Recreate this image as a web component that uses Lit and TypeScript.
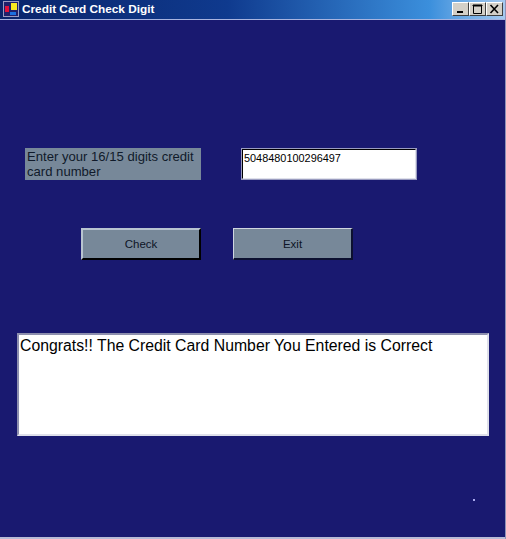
import { LitElement, html, css } from "lit";
import { customElement } from "lit/decorators.js";

@customElement("app-root")
export class AppRoot extends LitElement {
  static styles = css`
    :host { display: block; width: 506px; height: 539px; font-family: "Liberation Sans", Arial, sans-serif; overflow: hidden; }
    .window { position: relative; box-sizing: border-box; width: 506px; height: 539px; display: flex; flex-direction: column; background: #191970; border-right: 1px solid #8f92b8; }
    .titlebar { box-sizing: border-box; height: 20px; flex: none; display: flex; align-items: center; padding: 0 2px 1px 3px; gap: 3px;
      background: linear-gradient(90deg, #0a246a 0%, #0f3a8e 45%, #3b8fdc 85%, #a6caf0 100%); border-bottom: 1px solid #a8b4e0; }
    .app-icon { width: 16px; height: 16px; flex: none; display: block; }
    .title { color: #fff; font-weight: 700; font-size: 11.8px; flex: 1; white-space: nowrap; }
    .controls { display: flex; }
    .ctl { box-sizing: border-box; width: 17px; height: 14px; background: #d4d0c8; display: block;
      border: 1px solid; border-color: #fff #404040 #404040 #fff; }
    .ctl svg { display: block; width: 15px; height: 12px; }
    .form { flex: 1; display: flex; flex-direction: column; border-bottom: 2px solid #b9bbd6; }
    .row1 { display: flex; padding: 128px 0 0 25px; gap: 40px; }
    .label { box-sizing: border-box; width: 176px; height: 32px; background: #778899; color: #101a2a; font-size: 13.1px; line-height: 15px; padding: 1px 2px; }
    .input { box-sizing: border-box; width: 176px; height: 32px; background: #fff; color: #000; font-size: 10.9px; line-height: 14px; padding: 1px 1px;
      border: 2px solid; border-color: #000 #dfe0ea #dfe0ea #000; outline: 1px solid #9a9cc0; outline-offset: -1px; }
    .row2 { display: flex; padding: 48px 0 0 81px; gap: 32px; }
    .btn { box-sizing: border-box; width: 120px; height: 32px; background: #778899; color: #0d1526; font-size: 11.5px; display: flex; align-items: center; justify-content: center; font-family: "Liberation Sans", Arial, sans-serif; padding: 0; }
    .btn.check { border: 2px solid; border-color: #b8c4d0 #000 #000 #b8c4d0; }
    .btn.exit { border: 1px solid; border-color: #cfd6e0 #0c1030 #0c1030 #cfd6e0; border-bottom-width: 2px; border-right-width: 2px; }
    .result { box-sizing: border-box; margin: 73px 0 0 17px; width: 472px; height: 103px; background: #fff; color: #000; font-size: 15.8px; line-height: 19px; padding: 1px 1px;
      border: 2px solid; border-color: #8d8fae #dfe0ea #dfe0ea #8d8fae; }
    .dot { position: absolute; left: 473px; top: 499px; width: 2px; height: 2px; background: #a9a9ee; }
  `;

  render() {
    return html`
      <div class="window">
        <div class="titlebar">
          <svg class="app-icon" viewBox="0 0 16 16">
            <rect width="16" height="16" fill="#9a9ac0"/>
            <rect x="1" y="1" width="14" height="14" fill="#20206a"/>
            <rect x="2" y="5" width="4" height="6" fill="#e0103a"/>
            <rect x="8" y="2" width="6" height="7" fill="#f8e820"/>
            <rect x="7" y="11" width="6" height="3" fill="#1c70e0"/>
          </svg>
          <span class="title">Credit Card Check Digit</span>
          <div class="controls">
            <span class="ctl"><svg viewBox="0 0 15 12"><rect x="4" y="8" width="6" height="2" fill="#000"/></svg></span>
            <span class="ctl"><svg viewBox="0 0 15 12"><path d="M3.5 2.5H11.5V10.5H3.5Z M3 2H12V3H3Z" fill="none" stroke="#000"/></svg></span>
            <span class="ctl"><svg viewBox="0 0 15 12"><path d="M3.5 2L11 10M11 2L3.5 10" stroke="#000" stroke-width="1.6" fill="none"/></svg></span>
          </div>
        </div>
        <div class="form">
          <div class="row1">
            <div class="label">Enter your 16/15 digits credit card number</div>
            <div class="input">5048480100296497</div>
          </div>
          <div class="row2">
            <button class="btn check">Check</button>
            <button class="btn exit">Exit</button>
          </div>
          <div class="result">Congrats!! The Credit Card Number You Entered is Correct</div>
        </div>
        <div class="dot"></div>
      </div>
    `;
  }
}
